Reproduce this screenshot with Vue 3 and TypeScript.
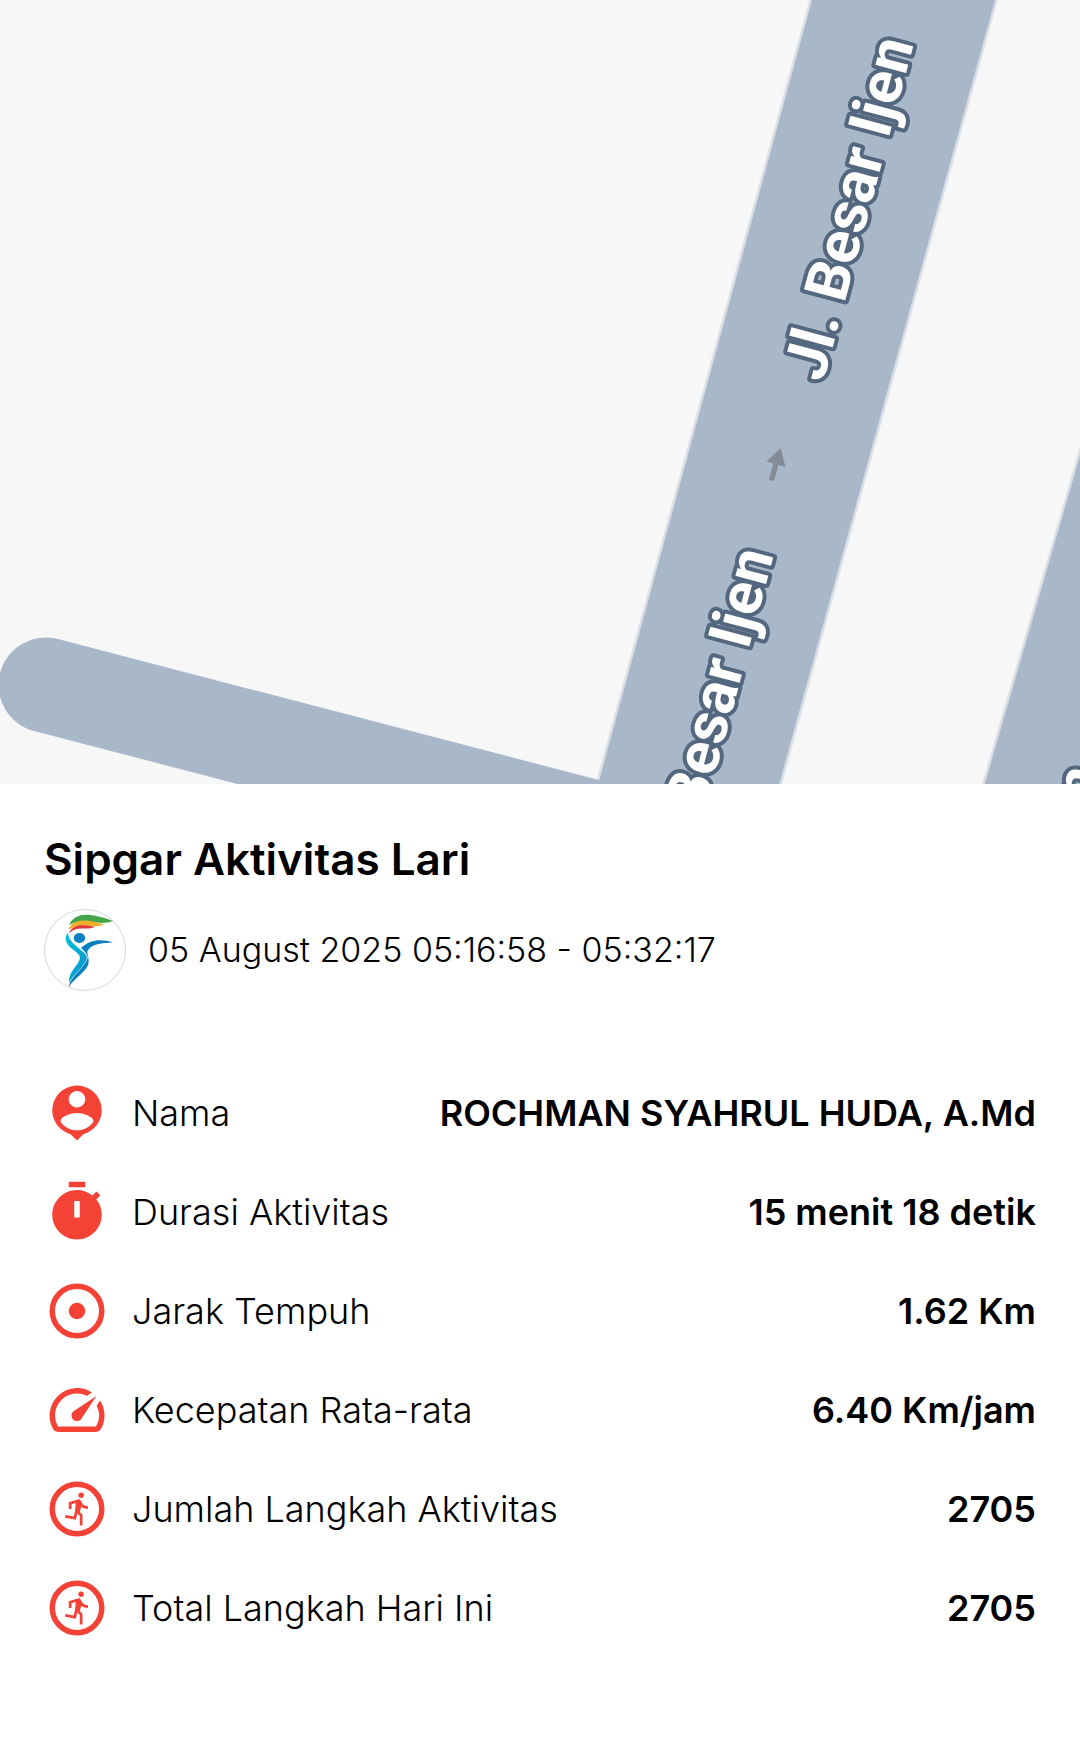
<script setup lang="ts">
type IconName = 'person' | 'timer' | 'target' | 'speed' | 'run'

interface Stat {
  icon: IconName
  label: string
  value: string
}

const stats: Stat[] = [
  { icon: 'person', label: 'Nama', value: 'ROCHMAN SYAHRUL HUDA, A.Md' },
  { icon: 'timer', label: 'Durasi Aktivitas', value: '15 menit 18 detik' },
  { icon: 'target', label: 'Jarak Tempuh', value: '1.62 Km' },
  { icon: 'speed', label: 'Kecepatan Rata-rata', value: '6.40 Km/jam' },
  { icon: 'run', label: 'Jumlah Langkah Aktivitas', value: '2705' },
  { icon: 'run', label: 'Total Langkah Hari Ini', value: '2705' },
]

const roadLabels = [
  { x: 823, y: 383 },
  { x: 683, y: 894 },
  { x: 1010, y: 1112 },
]
</script>

<template>
  <main class="page">
    <svg class="map" viewBox="0 0 1080 784" role="img" aria-label="Jl. Besar Ijen">
      <rect width="1080" height="784" fill="#f7f7f7" />
      <g class="roads">
        <path d="M46 685 L660 845" stroke="#a9b8c9" stroke-width="95" stroke-linecap="round" />
        <path class="road" d="M812 0 L995 0 L779 785 L598 785 Z" />
        <path class="road" d="M1084 442 L1090 790 L983 790 Z" />
      </g>
      <path
        d="M780.7 448 L785.5 467 L778.5 465 L774 481 L769 480 L773.3 463.5 L766.5 461.5 Z"
        fill="#828b96"
      />
      <text
        v-for="label in roadLabels"
        :key="label.y"
        class="road-label"
        :transform="`translate(${label.x} ${label.y}) rotate(-75)`"
      >Jl. Besar Ijen</text>
    </svg>

    <section class="details">
      <h1 class="title">Sipgar Aktivitas Lari</h1>
      <div class="session">
        <svg class="logo" viewBox="0 0 82 82" aria-hidden="true">
          <defs>
            <linearGradient id="body" x1="0" y1="0" x2="1" y2="1">
              <stop offset="0" stop-color="#00c4da" />
              <stop offset="1" stop-color="#0a8fcb" />
            </linearGradient>
          </defs>
          <circle cx="41" cy="41" r="40.5" fill="#fff" stroke="#c4c4c4" stroke-width="0.7" />
          <path d="M25 16 C31 3 45 3 69 12 C52 18 42 7 25 16 Z" fill="#43a648" />
          <path d="M24.500 21 C29 9 42 10 60 15.500 C46 21 37 12 24.500 21 Z" fill="#f3ad2c" />
          <path d="M24.500 24.500 C29 15 38 15 51 18 C42 22 34 16 24.500 24.500 Z" fill="#e1393b" />
          <ellipse cx="35.500" cy="29" rx="5.700" ry="5" fill="#0783c3" />
          <path d="M24 24 C20 27 21 34 27 39 C33 44 38 46 35 52 C32 59 24 63 25 75 C28 66 43 57 43 48 C42 42 25 36 24 24 Z" fill="url(#body)" />
          <path d="M37 39 C45 31 57 29 69 33.500 C58 34 47 35 43.500 42 C43 46 46 51 44 56 C41 64 30 69 25 78 C26 66 41 59 43.500 48 C43 44 40 42 37 39 Z" fill="#087fbe" />
          <path d="M25 75 C28 66 43 57 43.500 47" fill="none" stroke="#fff" stroke-width="0.6" />
        </svg>
        <p class="date">05 August 2025 05:16:58 - 05:32:17</p>
      </div>

      <dl class="stats">
        <div v-for="stat in stats" :key="stat.label" class="stat">
          <dt class="label">
            <svg class="icon" viewBox="0 0 24 24" aria-hidden="true">
              <path
                v-if="stat.icon === 'person'"
                d="M12 2a9 9 0 0 0-9 9c0 4.170 2.840 7.670 6.690 8.690L12 22l2.310-2.310C18.160 18.670 21 15.170 21 11a9 9 0 0 0-9-9zm0 2c1.660 0 3 1.340 3 3s-1.340 3-3 3-3-1.340-3-3 1.340-3 3-3zm0 14.300c-2.500 0-4.710-1.280-6-3.220.030-1.990 4-3.080 6-3.080s5.970 1.090 6 3.080c-1.290 1.940-3.500 3.220-6 3.220z"
              />
              <path
                v-else-if="stat.icon === 'timer'"
                fill-rule="evenodd"
                d="M15 1H9v2h6V1zm-4 13h2V8h-2v6zm8.030-6.610l1.420-1.420c-.430-.510-.900-.990-1.410-1.410l-1.420 1.420C16.070 4.740 14.120 4 12 4c-4.970 0-9 4.030-9 9s4.020 9 9 9 9-4.030 9-9c0-2.120-.740-4.070-1.970-5.610z"
              />
              <g v-else-if="stat.icon === 'target'">
                <circle class="stroke" cx="12" cy="12" r="9" stroke-width="2" />
                <circle cx="12" cy="12" r="3" />
              </g>
              <path
                v-else-if="stat.icon === 'speed'"
                d="M20.380 8.570l-1.230 1.850a8 8 0 0 1-.220 7.580H5.070A8 8 0 0 1 15.580 6.850l1.850-1.230A10 10 0 0 0 3.350 19a2 2 0 0 0 1.720 1h13.850a2 2 0 0 0 1.740-1 10 10 0 0 0-.270-10.440zM10.590 15.410a2 2 0 0 0 2.830 0l5.660-8.490-8.490 5.660a2 2 0 0 0 0 2.830z"
              />
              <g v-else>
                <circle class="stroke" cx="12" cy="12" r="9" stroke-width="2" />
                <circle cx="13.500" cy="7" r="1" />
                <path class="stroke" stroke-width="1" d="M9.500 12V9.900l3.100-.900c.600 1.600 1.500 2.400 3.400 2.500" />
                <path class="stroke" stroke-width="1" d="M7.700 14.700l3.500.600 1.400-6.200" />
                <path class="stroke" stroke-width="1" d="M11.900 12.700l1.600 1.600V18" />
                <path d="M11.500 9l1.700-.300.700 1.200-.900 3.300-1.600-.400z" />
              </g>
            </svg>
            <span>{{ stat.label }}</span>
          </dt>
          <dd class="value">{{ stat.value }}</dd>
        </div>
      </dl>
    </section>
  </main>
</template>

<style>
body {
  margin: 0;
  background: #fff;
}
</style>

<style scoped>
.page {
  color: #000;
  font-family: Inter, "Open Sans", sans-serif;
}

.map {
  display: block;
  width: 100%;
}

.roads {
  fill: #a9b8c9;
}

.road {
  stroke: #a9b8c9;
  stroke-width: 5px;
  stroke-opacity: 0.4;
}

.road-label {
  fill: #fff;
  stroke: #53677f;
  stroke-width: 8px;
  stroke-linejoin: round;
  paint-order: stroke;
  font-family: Roboto, sans-serif;
  font-size: 60px;
  font-weight: 700;
}

.details {
  padding: 50px 44px 108px;
}

.title {
  margin: 0 0 25px;
  font-size: 44px;
  font-weight: 600;
  line-height: 50px;
}

.session {
  display: flex;
  align-items: center;
  gap: 22px;
}

.logo {
  flex: none;
  width: 82px;
  height: 82px;
}

.date {
  margin: 0;
  font-size: 34px;
  font-weight: 300;
  line-height: 44px;
}

.stats {
  display: flex;
  flex-direction: column;
  gap: 33px;
  margin: 89px 0 0;
}

.stat {
  display: flex;
  align-items: center;
  justify-content: space-between;
  gap: 22px;
  font-size: 36px;
  line-height: 44px;
}

.label {
  display: flex;
  align-items: center;
  gap: 22px;
  font-weight: 300;
}

.icon {
  flex: none;
  width: 66px;
  height: 66px;
  fill: #f44336;
}

.icon .stroke {
  fill: none;
  stroke: #f44336;
}

.value {
  margin: 0;
  font-weight: 600;
  text-align: right;
}
</style>
